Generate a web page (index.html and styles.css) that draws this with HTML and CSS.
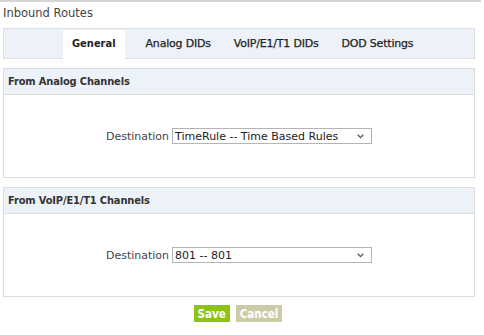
FILE: index.html
```html
<html lang="en">

<head>
    <meta charset="UTF-8">
    <title>Inbound Routes</title>
    <link rel="stylesheet" href="styles.css">
</head>

<body>
    <div class="page">
        <div class="page-title">Inbound Routes</div>

        <!-- Tabs -->
        <ul class="tabs">
            <li class="tab active">General</li>
            <li class="tab">Analog DIDs</li>
            <li class="tab">VoIP/E1/T1 DIDs</li>
            <li class="tab">DOD Settings</li>
        </ul>

        <!-- Analog -->
        <div class="panel">
            <div class="panel-header">From Analog Channels</div>
            <div class="panel-body">
                <label class="field-label" for="analog-dest">Destination</label>
                <span class="select-wrap">
                    <select id="analog-dest" class="dest-select">
                        <option>TimeRule -- Time Based Rules</option>
                    </select>
                    <svg class="chevron" width="7" height="5" viewBox="0 0 7 5"><path d="M0.8 0.8 L3.5 3.6 L6.2 0.8" fill="none" stroke="#555" stroke-width="1.3"/></svg>
                </span>
            </div>
        </div>

        <!-- VoIP -->
        <div class="panel">
            <div class="panel-header">From VoIP/E1/T1 Channels</div>
            <div class="panel-body">
                <label class="field-label" for="voip-dest">Destination</label>
                <span class="select-wrap">
                    <select id="voip-dest" class="dest-select">
                        <option>801 -- 801</option>
                    </select>
                    <svg class="chevron" width="7" height="5" viewBox="0 0 7 5"><path d="M0.8 0.8 L3.5 3.6 L6.2 0.8" fill="none" stroke="#555" stroke-width="1.3"/></svg>
                </span>
            </div>
        </div>

        <div class="actions">
            <button class="btn btn-save">Save</button>
            <button class="btn btn-cancel">Cancel</button>
        </div>
    </div>
</body>

</html>
```

FILE: styles.css
```css
/* Global */
body {
    margin: 0;
    padding: 0;
    font-family: 'DejaVu Sans', Verdana, sans-serif;
    font-size: 11px;
    color: #333;
    background-color: #fff;
}

.page {
    width: 481px;
    border-top: 2px solid #d4d4d4;
}

.page-title {
    height: 26px;
    line-height: 22px;
    padding-left: 3px;
    font-size: 11.5px;
    color: #444;
}

/* Tabs */
.tabs {
    list-style: none;
    margin: 0 0 0 3px;
    padding: 0 0 0 59px;
    width: 411px;
    height: 29px;
    display: flex;
    background-color: #edf2f8;
    border: 1px solid #dcdfe3;
}

.tab {
    height: 30px;
    line-height: 29px;
    padding: 0 9px;
    margin-right: 5px;
    color: #222;
    letter-spacing: -0.2px;
    -webkit-text-stroke: 0.25px #222;
}

.tab.active {
    background-color: #fff;
    font-family: 'DejaVu Sans Condensed', 'DejaVu Sans', sans-serif;
    font-weight: bold;
    letter-spacing: 0;
    -webkit-text-stroke: 0;
    margin-top: 1px;
    height: 29px;
    line-height: 27px;
    margin-right: 12px;
}

/* Panels */
.panel {
    margin: 9px 0 0 3px;
    width: 470px;
    border: 1px solid #dcdcdc;
}

.panel-header {
    height: 25px;
    line-height: 25px;
    padding-left: 4px;
    background-color: #edf2f8;
    border-bottom: 1px solid #dcdcdc;
    font-family: 'DejaVu Sans Condensed', 'DejaVu Sans', sans-serif;
    font-weight: bold;
    letter-spacing: -0.15px;
    color: #333;
}

.panel-body {
    height: 82px;
    display: flex;
    align-items: center;
    justify-content: center;
    gap: 3px;
}

.field-label {
    color: #444;
}

.select-wrap {
    position: relative;
    display: inline-block;
}

.dest-select {
    appearance: none;
    -webkit-appearance: none;
    width: 200px;
    height: 16px;
    margin: 0;
    padding: 0 0 0 2px;
    border: 1px solid #b4b4b4;
    border-radius: 0;
    background-color: #fff;
    font-family: 'DejaVu Sans', Verdana, sans-serif;
    font-size: 11px;
    color: #222;
    display: block;
}

.chevron {
    position: absolute;
    right: 8px;
    top: 6px;
}

/* Buttons */
.actions {
    width: 476px;
    display: flex;
    justify-content: center;
    gap: 6px;
    margin-top: 8px;
}

.btn {
    height: 17px;
    padding: 0 4px;
    border: none;
    border-radius: 0;
    font-family: 'DejaVu Sans Condensed', 'DejaVu Sans', sans-serif;
    font-size: 11.5px;
    font-weight: bold;
    color: #fff;
    cursor: pointer;
}

.btn-save {
    background-color: #8cc315;
}

.btn-cancel {
    background-color: #cbcba8;
}
```
